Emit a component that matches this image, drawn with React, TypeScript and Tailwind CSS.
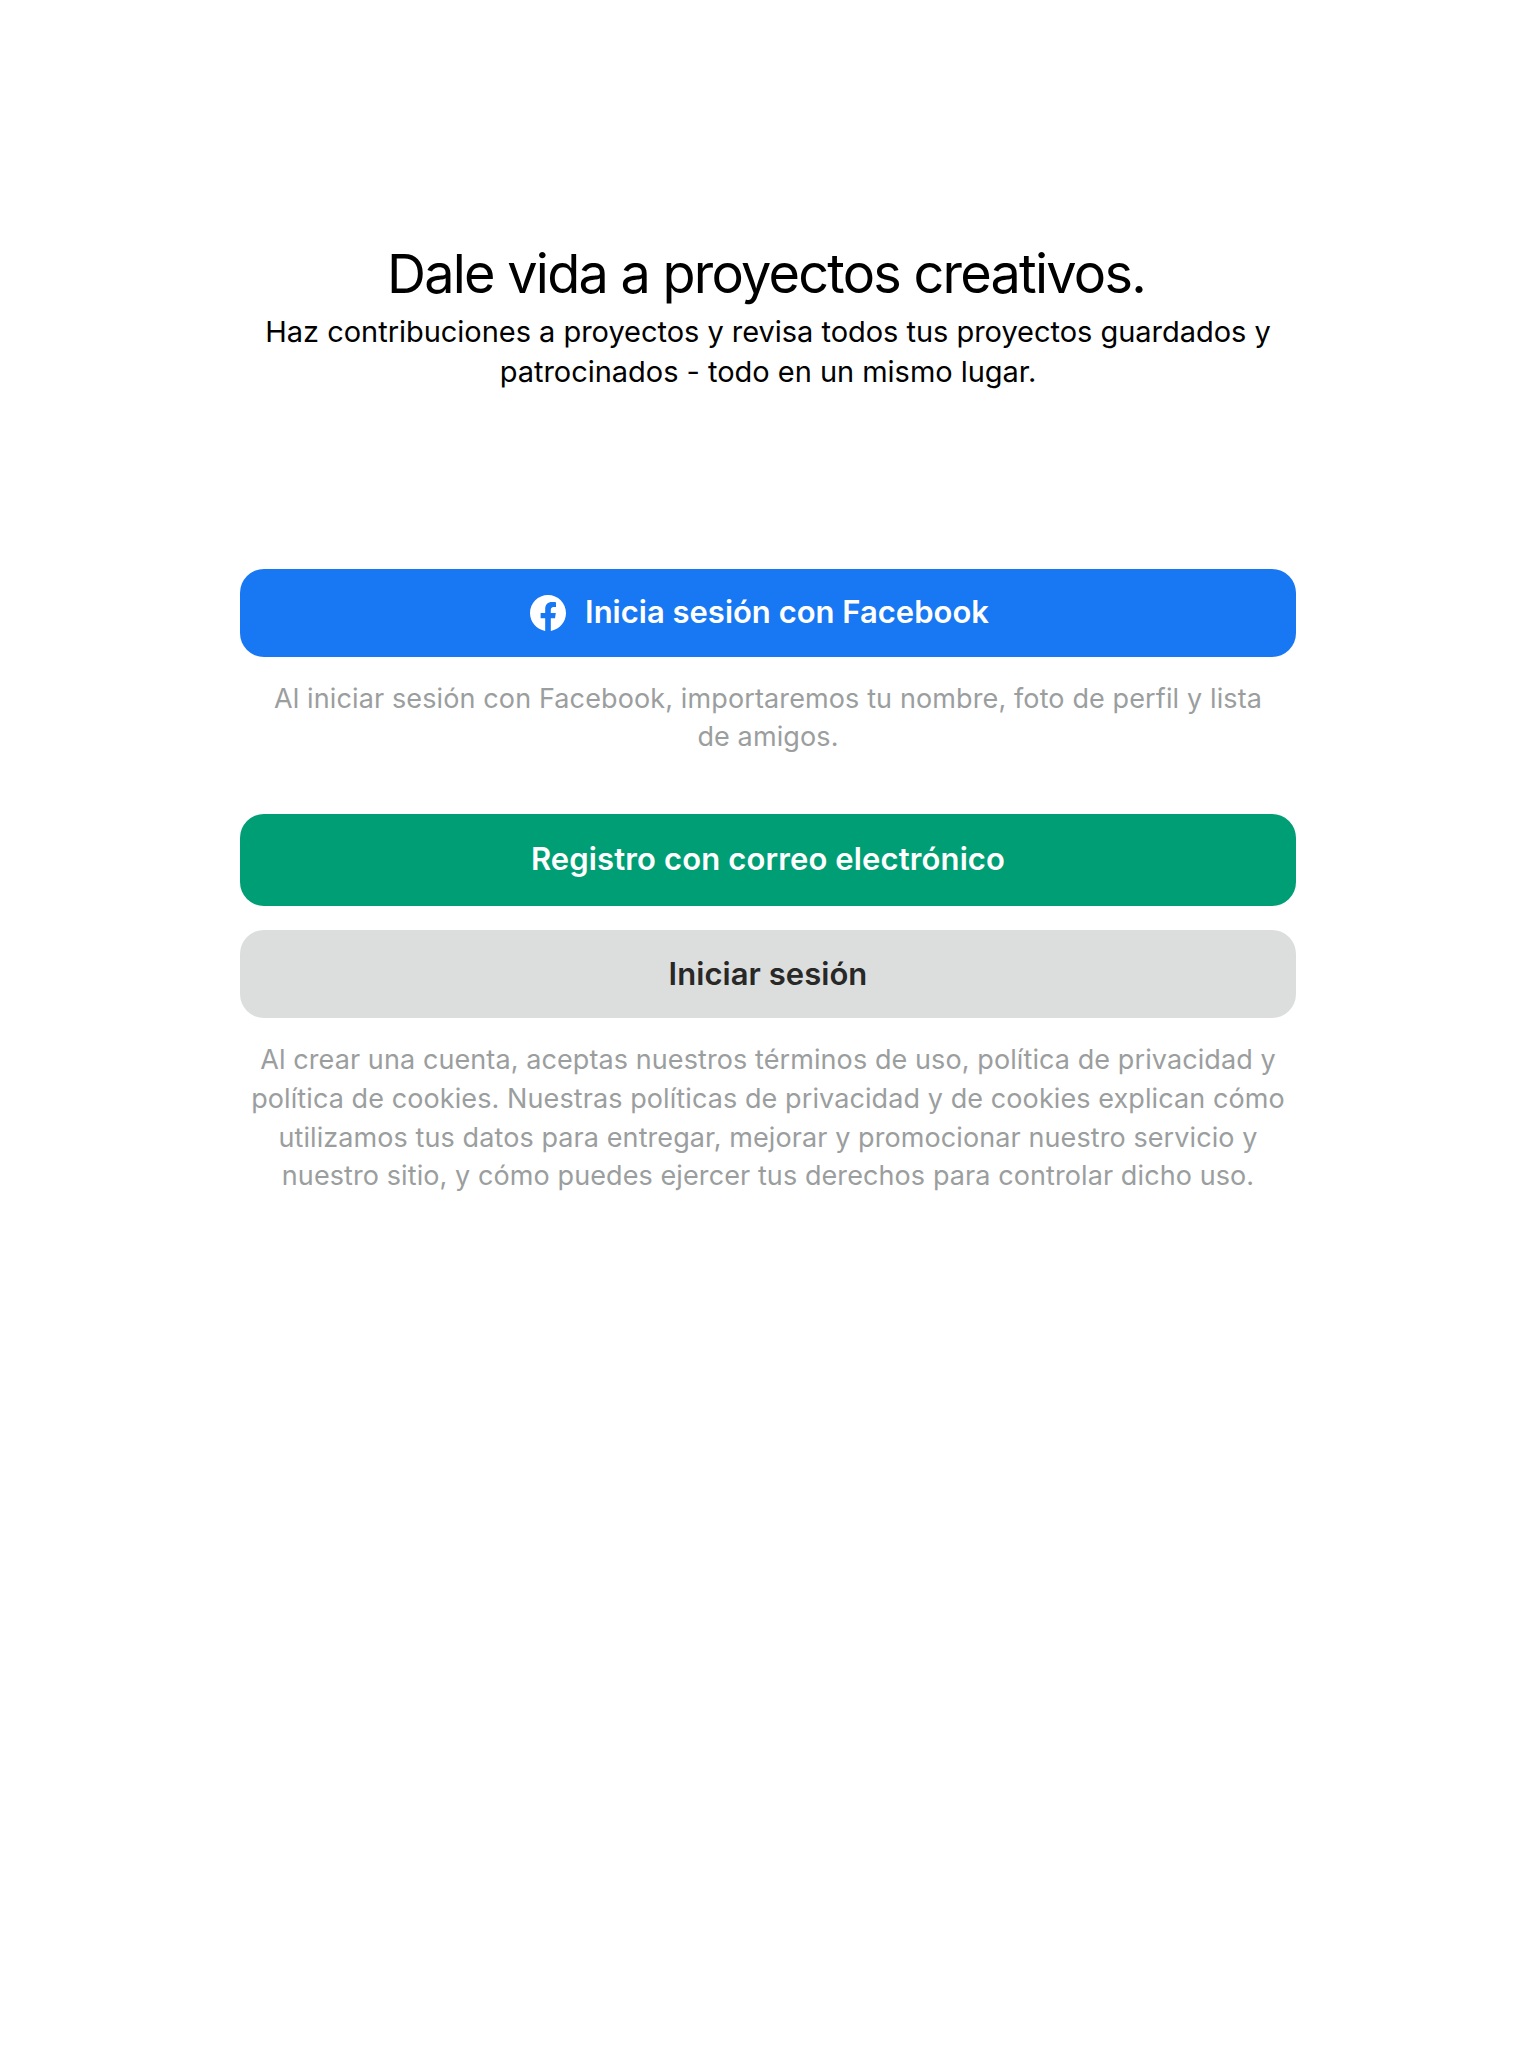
import React from "react";

function FacebookLogo() {
  return (
    <svg viewBox="0 0 24 24" className="h-9 w-9 shrink-0" fill="currentColor" aria-hidden="true">
      <path d="M24 12.073C24 5.405 18.627 0 12 0S0 5.405 0 12.073C0 18.1 4.388 23.094 10.125 24v-8.437H7.078v-3.49h3.047V9.413c0-3.025 1.792-4.697 4.533-4.697 1.312 0 2.686.236 2.686.236v2.971H15.83c-1.491 0-1.956.93-1.956 1.886v2.264h3.328l-.532 3.49h-2.796V24C19.612 23.094 24 18.1 24 12.073z" />
    </svg>
  );
}

function Line({ children, className = "" }: { children: React.ReactNode; className?: string }) {
  return <span className={"block whitespace-nowrap " + className}>{children}</span>;
}

export default function App() {
  return (
    <main className="flex h-[2048px] w-[1536px] flex-col bg-white px-[240px] pt-[240px] text-center font-['Inter',sans-serif] text-black">
      <h1 className="flex h-[72px] flex-col items-center pr-1 text-[54px] leading-[67px]">
        <Line className="tracking-[-1.76px]">Dale vida a proyectos creativos.</Line>
      </h1>
      <p className="flex flex-col items-center text-[29px] leading-10 tracking-[-0.03px]">
        <Line>Haz contribuciones a proyectos y revisa todos tus proyectos guardados y</Line>
        <Line>patrocinados - todo en un mismo lugar.</Line>
      </p>
      <button className="mt-[177px] flex h-[88px] shrink-0 items-center justify-center gap-[19px] rounded-[24px] bg-[#1877f2] pr-[17px] text-[31px] font-semibold text-white">
        <FacebookLogo />
        <Line className="pb-0.5">Inicia sesión con Facebook</Line>
      </button>
      <p className="mt-[23px] flex flex-col items-center text-[27px] leading-[38px] tracking-[0.12px] text-[#9b9e9e]">
        <Line>Al iniciar sesión con Facebook, importaremos tu nombre, foto de perfil y lista</Line>
        <Line>de amigos.</Line>
      </p>
      <button className="mt-[58px] flex h-[92px] shrink-0 items-center justify-center rounded-[24px] bg-[#009e74] text-[31px] font-semibold tracking-[0.13px] text-white">
        <Line className="pb-px">Registro con correo electrónico</Line>
      </button>
      <button className="mt-6 flex h-[88px] shrink-0 items-center justify-center rounded-[24px] bg-[#dcdedd] text-[31px] font-semibold tracking-[0.05px] text-[#282828]">
        <Line>Iniciar sesión</Line>
      </button>
      <p className="mt-[23px] flex flex-col items-center text-[27px] leading-[38.8px] tracking-[0.09px] text-[#9b9e9e]">
        <Line>Al crear una cuenta, aceptas nuestros términos de uso, política de privacidad y</Line>
        <Line>política de cookies. Nuestras políticas de privacidad y de cookies explican cómo</Line>
        <Line>utilizamos tus datos para entregar, mejorar y promocionar nuestro servicio y</Line>
        <Line>nuestro sitio, y cómo puedes ejercer tus derechos para controlar dicho uso.</Line>
      </p>
    </main>
  );
}
